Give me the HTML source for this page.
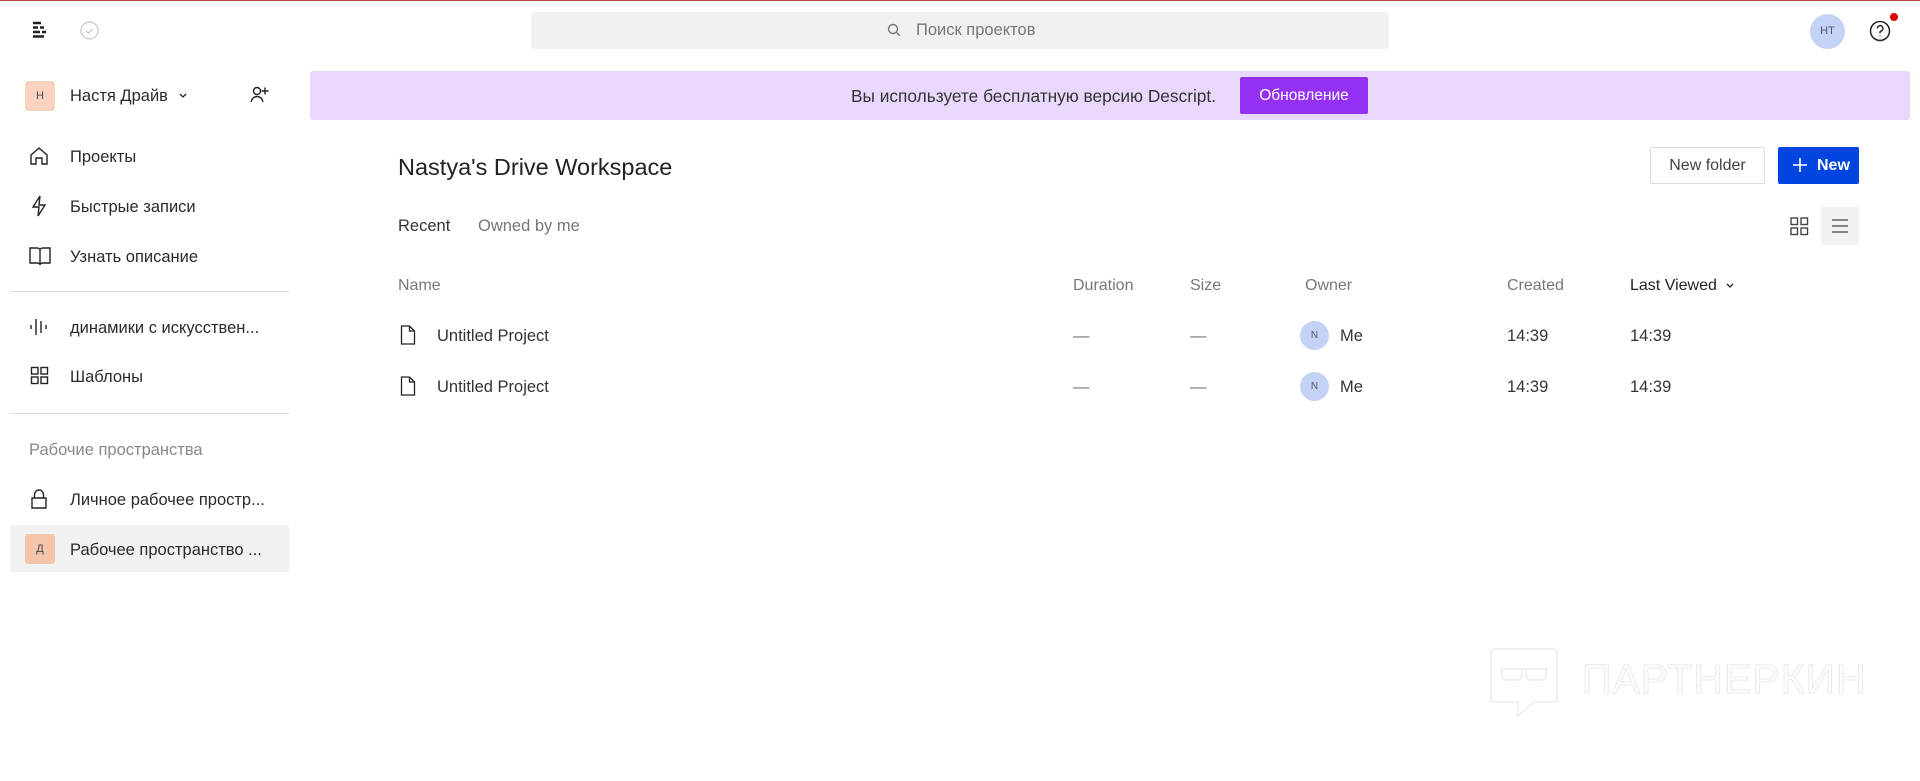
<!DOCTYPE html>
<html><head><meta charset="utf-8"><style>
*{box-sizing:border-box;margin:0;padding:0}
body{width:1920px;height:781px;background:#fff;font-family:"Liberation Sans","Noto Sans CJK SC",sans-serif;color:#222;position:relative;overflow:hidden;font-size:16.5px}
.a{position:absolute}
.t{position:absolute;white-space:nowrap;line-height:20px}
.side .t{left:70px;font-size:16.5px;color:#2a2a2a}
svg{position:absolute;fill:none}
.hd{color:#777;font-size:16px}
</style></head><body>
<div class="a" style="left:0;top:0;width:1920px;height:1px;background:#b44"></div>
<!-- logo -->
<svg style="left:31px;top:21px" width="18" height="18" viewBox="0 0 18 18" stroke="#222" stroke-width="2.4"><path d="M2 2h8M2 6.5h5M9 6.5h4M2 11h7M11 11h4M2 15.5h11"/></svg>
<svg style="left:80px;top:21px" width="19" height="19" viewBox="0 0 19 19" stroke="#c4c4c4" stroke-width="1.2"><circle cx="9.5" cy="9.5" r="8.5"/><path d="M6 9.8l2.4 2.3 4.6-4.6"/></svg>
<!-- search -->
<div class="a" style="left:531px;top:12px;width:858px;height:37px;background:#f1f1f1;border-radius:3px"></div>
<svg style="left:887px;top:23px" width="14" height="14" viewBox="0 0 14 14" stroke="#777" stroke-width="1.4"><circle cx="6" cy="6" r="4.5"/><path d="M9.3 9.3l3.5 3.5"/></svg>
<div class="t" style="left:916px;top:20px;color:#777">Поиск проектов</div>
<div class="a" style="left:1810px;top:14px;width:35px;height:35px;border-radius:50%;background:#c3d2f5;color:#556;font-size:11px;text-align:center;line-height:35px">HT</div>
<svg style="left:1869px;top:20px" width="22" height="22" viewBox="0 0 22 22" stroke="#222" stroke-width="1.5"><circle cx="11" cy="11" r="9.5"/><path d="M8.3 8.5a2.8 2.8 0 1 1 3.5 2.7c-.6.2-.8.6-.8 1.3v.8M11 15.5v.5"/></svg>
<div class="a" style="left:1890px;top:13px;width:8px;height:8px;border-radius:50%;background:#d00"></div>
<!-- sidebar -->
<div class="side">
<div class="a" style="left:25px;top:81px;width:30px;height:30px;background:#f9d3c0;border-radius:3px;font-size:11px;text-align:center;line-height:30px;color:#444">Н</div>
<div class="t" style="top:86px">Настя Драйв</div>
<svg style="left:178px;top:92px" width="10" height="7" viewBox="0 0 10 7" stroke="#222" stroke-width="1.3"><path d="M2 2l3 3 3-3"/></svg>
<svg style="left:249px;top:85px" width="22" height="20" viewBox="0 0 22 20" stroke="#222" stroke-width="1.4"><circle cx="8" cy="6" r="3.5"/><path d="M2 17c1-4 3.5-5.5 6-5.5s5 1.5 6 5.5M16 2.5v7M12.5 6h7"/></svg>
<svg style="left:29px;top:146px" width="20" height="20" viewBox="0 0 20 20" stroke="#222" stroke-width="1.4"><path d="M2 9L10 2l8 7v9h-5v-6H7v6H2z"/></svg>
<div class="t" style="top:147px">Проекты</div>
<svg style="left:31px;top:195px" width="16" height="22" viewBox="0 0 16 22" stroke="#222" stroke-width="1.4"><path d="M9 1L2 12h6l-1 9 7-11H8z"/></svg>
<div class="t" style="top:197px">Быстрые записи</div>
<svg style="left:29px;top:246px" width="22" height="20" viewBox="0 0 22 20" stroke="#222" stroke-width="1.4"><path d="M1 2h7c2 0 3 1 3 2v15c0-1-1-2-3-2H1zM21 2h-7c-2 0-3 1-3 2v15c0-1 1-2 3-2h7z"/></svg>
<div class="t" style="top:247px">Узнать описание</div>
<div class="a" style="left:10px;top:291px;width:279px;height:1px;background:#ddd"></div>
<svg style="left:29px;top:316px" width="20" height="22" viewBox="0 0 20 22" stroke="#222" stroke-width="1.4"><path d="M2 9v4M7 3v16M12 5v12M17 9v4"/></svg>
<div class="t" style="top:318px">динамики с искусствен...</div>
<svg style="left:30px;top:366px" width="20" height="20" viewBox="0 0 20 20" stroke="#222" stroke-width="1.4"><rect x="1.5" y="1.5" width="6.5" height="6.5"/><rect x="11" y="1.5" width="6.5" height="6.5"/><rect x="1.5" y="11" width="6.5" height="6.5"/><rect x="11" y="11" width="6.5" height="6.5"/></svg>
<div class="t" style="top:367px">Шаблоны</div>
<div class="a" style="left:10px;top:413px;width:279px;height:1px;background:#ddd"></div>
<div class="t" style="left:29px!important;top:440px;color:#888">Рабочие пространства</div>
<svg style="left:30px;top:488px" width="18" height="22" viewBox="0 0 18 22" stroke="#222" stroke-width="1.4"><path d="M4.5 10V6.5a4.5 4.5 0 0 1 9 0V10M2 10h14v10H2z"/></svg>
<div class="t" style="top:490px">Личное рабочее простр...</div>
<div class="a" style="left:10px;top:525px;width:279px;height:47px;background:#f1f1f1;border-radius:3px"></div>
<div class="a" style="left:25px;top:534px;width:30px;height:30px;background:#f4c4ad;border-radius:3px;font-size:11px;text-align:center;line-height:30px;color:#444">Д</div>
<div class="t" style="top:540px">Рабочее пространство ...</div>
</div>
<!-- banner -->
<div class="a" style="left:310px;top:71px;width:1600px;height:49px;background:#e9d8fd;border-radius:3px"></div>
<div class="t" style="left:851px;top:86px;color:#333;font-size:17.3px">Вы используете бесплатную версию Descript.</div>
<div class="a" style="left:1240px;top:77px;width:128px;height:37px;background:#9530f5;border-radius:2px;color:#fff;font-size:15.5px;text-align:center;line-height:37px">Обновление</div>
<!-- main -->
<div class="t" style="left:398px;top:153px;font-size:23.5px;line-height:28px;color:#222">Nastya's Drive Workspace</div>
<div class="a" style="left:1650px;top:147px;width:115px;height:37px;border:1px solid #ddd;border-radius:2px;color:#444;font-size:16px;text-align:center;line-height:35px">New folder</div>
<div class="a" style="left:1778px;top:147px;width:81px;height:37px;background:#0045e0;border-radius:2px"></div>
<svg style="left:1792px;top:157px" width="16" height="16" viewBox="0 0 16 16" stroke="#fff" stroke-width="1.6"><path d="M8 1v14M1 8h14"/></svg>
<div class="t" style="left:1817px;top:156px;color:#fff;font-weight:bold;font-size:16px">New</div>
<div class="t" style="left:398px;top:216px;color:#333">Recent</div>
<div class="t" style="left:478px;top:216px;color:#777">Owned by me</div>
<svg style="left:1790px;top:217px" width="19" height="19" viewBox="0 0 19 19" stroke="#444" stroke-width="1.4"><rect x="1" y="1" width="6.5" height="6.5"/><rect x="11" y="1" width="6.5" height="6.5"/><rect x="1" y="11" width="6.5" height="6.5"/><rect x="11" y="11" width="6.5" height="6.5"/></svg>
<div class="a" style="left:1821px;top:207px;width:38px;height:38px;background:#f1f1f1;border-radius:2px"></div>
<svg style="left:1831px;top:217px" width="18" height="18" viewBox="0 0 18 18" stroke="#444" stroke-width="1.2"><path d="M1 3h16M1 9h16M1 15h16"/></svg>
<div class="t hd" style="left:398px;top:276px">Name</div>
<div class="t hd" style="left:1073px;top:276px">Duration</div>
<div class="t hd" style="left:1190px;top:276px">Size</div>
<div class="t hd" style="left:1305px;top:276px">Owner</div>
<div class="t hd" style="left:1507px;top:276px">Created</div>
<div class="t" style="left:1630px;top:276px;color:#222;font-size:16px">Last Viewed</div>
<svg style="left:1725px;top:282px" width="10" height="7" viewBox="0 0 10 7" stroke="#222" stroke-width="1.3"><path d="M2 2l3 3 3-3"/></svg>
<!-- rows -->
<svg style="left:400px;top:325px" width="16" height="20" viewBox="0 0 16 20" stroke="#222" stroke-width="1.3"><path d="M1.5 1h8l5 5v13h-13zM9.5 1v5h5"/></svg>
<div class="t" style="left:437px;top:326px;color:#333">Untitled Project</div>
<div class="t" style="left:1073px;top:326px;color:#777">—</div>
<div class="t" style="left:1190px;top:326px;color:#777">—</div>
<div class="a" style="left:1300px;top:321px;width:29px;height:29px;border-radius:50%;background:#c3d2f5;color:#556;font-size:10px;text-align:center;line-height:29px">N</div>
<div class="t" style="left:1340px;top:326px;color:#333">Me</div>
<div class="t" style="left:1507px;top:326px;color:#333">14:39</div>
<div class="t" style="left:1630px;top:326px;color:#333">14:39</div>
<svg style="left:400px;top:376px" width="16" height="20" viewBox="0 0 16 20" stroke="#222" stroke-width="1.3"><path d="M1.5 1h8l5 5v13h-13zM9.5 1v5h5"/></svg>
<div class="t" style="left:437px;top:377px;color:#333">Untitled Project</div>
<div class="t" style="left:1073px;top:377px;color:#777">—</div>
<div class="t" style="left:1190px;top:377px;color:#777">—</div>
<div class="a" style="left:1300px;top:372px;width:29px;height:29px;border-radius:50%;background:#c3d2f5;color:#556;font-size:10px;text-align:center;line-height:29px">N</div>
<div class="t" style="left:1340px;top:377px;color:#333">Me</div>
<div class="t" style="left:1507px;top:377px;color:#333">14:39</div>
<div class="t" style="left:1630px;top:377px;color:#333">14:39</div>
<!-- watermark -->
<svg style="left:1490px;top:647px" width="70" height="70" viewBox="0 0 70 70" stroke="#e8e8e8" stroke-width="1.3"><path d="M4 2h60a3 3 0 0 1 3 3v47a3 3 0 0 1-3 3H44L28 69V55H4a3 3 0 0 1-3-3V5a3 3 0 0 1 3-3z"/><path d="M12 22h46M12 22v6a5 5 0 0 0 5 5h10a5 5 0 0 0 5-5v-6M36 22v6a5 5 0 0 0 5 5h10a5 5 0 0 0 5-5v-6"/></svg>
<div class="t" style="left:1582px;top:656px;font-size:41px;line-height:46px;color:transparent;-webkit-text-stroke:1px #e8e8e8;letter-spacing:1px">ПАРТНЕРКИН</div>
</body></html>
